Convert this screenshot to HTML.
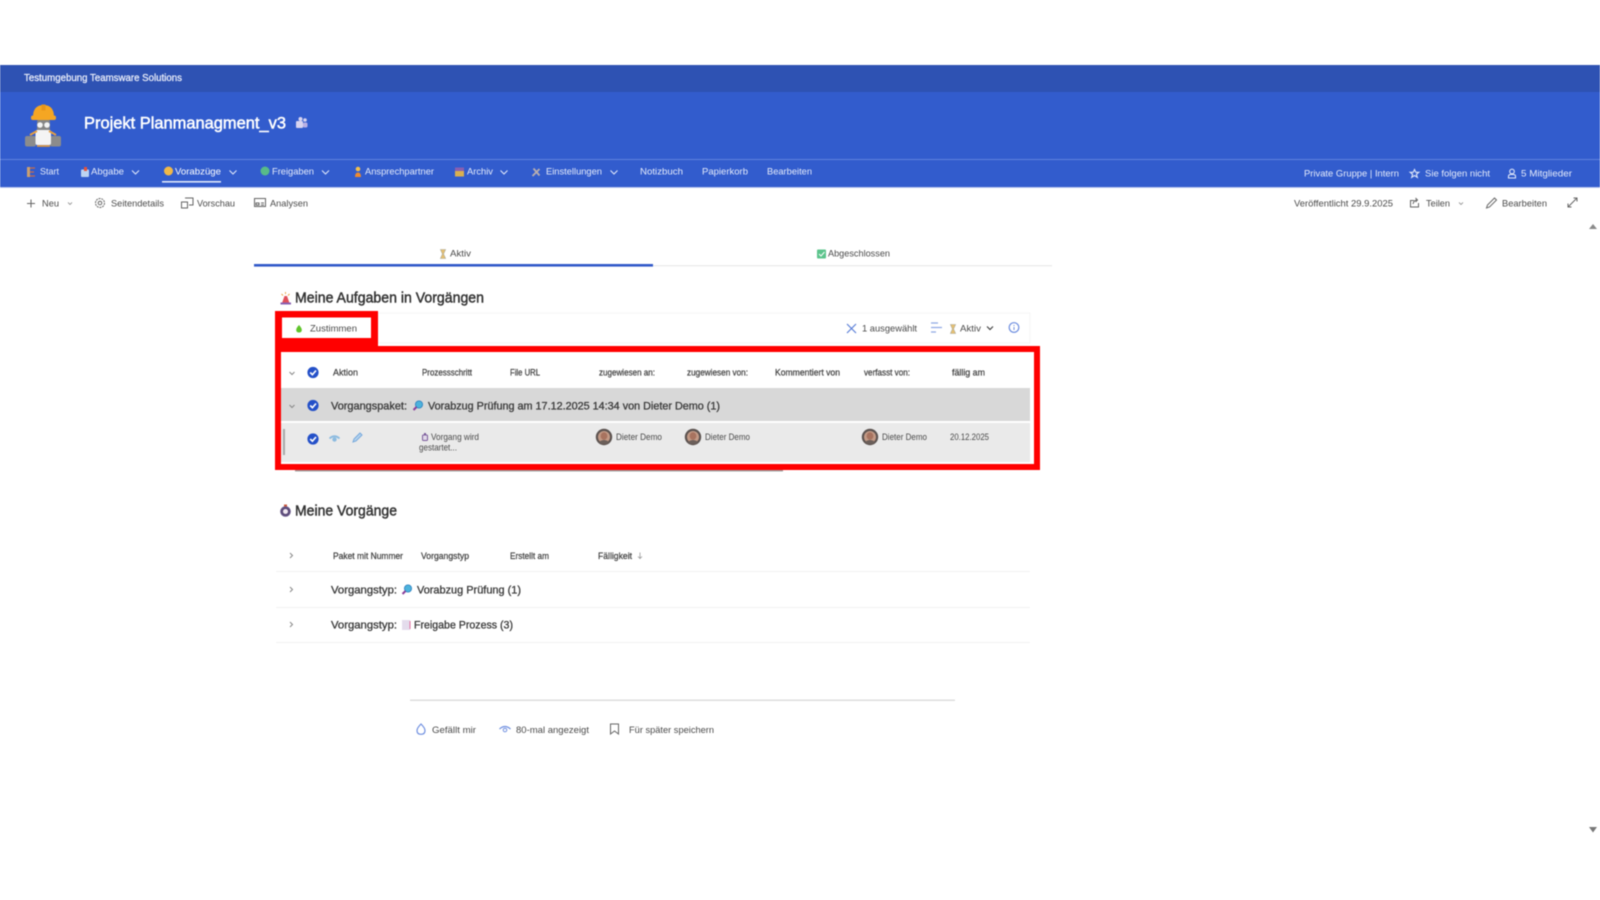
<!DOCTYPE html>
<html lang="de"><head><meta charset="utf-8"><title>Projekt Planmanagment_v3</title>
<style>
html,body{margin:0;padding:0;background:#fff;width:1600px;height:900px;overflow:hidden}
svg{display:block;filter:blur(.5px)}
text{font-family:"Liberation Sans",sans-serif;font-size:9.5px;fill:#4a4a4a;dominant-baseline:central}
.w{fill:#e6ecfb}
.h{font-size:9px;fill:#444;stroke:#444;stroke-width:.25px}
.t{font-size:14.5px;fill:#333;stroke:#333;stroke-width:.45px}
.g{font-size:11px;fill:#3c3c3c;stroke:#3c3c3c;stroke-width:.32px}
.i{fill:none;stroke:#666;stroke-width:1}
.b{fill:none;stroke:#6f8fe0;stroke-width:1.2}
.c{fill:none;stroke:#dfe7fa;stroke-width:1.1}
</style></head><body>
<svg width="1600" height="900" viewBox="0 0 1600 900" xmlns="http://www.w3.org/2000/svg">
<defs>
<g id="chk"><circle r="5.6" fill="#2450c8"/><path d="M-2.8 0 L-.6 2.2 L3 -2" fill="none" stroke="#fff" stroke-width="1.6"/></g>
<g id="av"><circle r="8.2" fill="#5c5350"/><circle r="6" fill="#c39a86"/><ellipse cy="-1" rx="3.4" ry="3.8" fill="#a8735f"/><path d="M-5 5 Q0 1 5 5 L3 7 L-3 7Z" fill="#6b5f5a"/></g>
<g id="mag"><circle cx="1" cy="-1.5" r="3.6" fill="#4db3dc" stroke="#2a7fc0" stroke-width=".8"/><path d="M-1.5 1 L-4.5 4" stroke="#8a3f9a" stroke-width="2"/></g>
<g id="hg"><path d="M-2.6 -4.5H2.6L.5 0L2.6 4.5H-2.6L-.5 0Z" fill="#e8c070" stroke="#a8a898" stroke-width=".6"/></g>
</defs>

<!-- top bars -->
<rect y="65" width="1600" height="27" fill="#2e52b3"/>
<rect y="92" width="1600" height="95" fill="#325ccd"/>
<rect y="159" width="1600" height="1" fill="#5f82de"/>
<rect y="187" width="1600" height="1" fill="#b9c8ef"/>
<text x="24" y="78.500" textLength="158" lengthAdjust="spacingAndGlyphs" style="font-size:10px;fill:#eef1fb;stroke:#eef1fb;stroke-width:.25px">Testumgebung Teamsware Solutions</text>

<!-- logo -->
<g>
<rect x="25" y="136" width="11" height="10.500" rx="2" fill="#8c8c8c"/><rect x="50" y="136" width="11" height="10.500" rx="2" fill="#8c8c8c"/>
<rect x="37" y="119" width="13" height="13" rx="3" fill="#858585"/>
<rect x="35.500" y="130" width="15.500" height="15" rx="2" fill="#f4f4f4"/>
<path d="M37 146h13" stroke="#f0a030" stroke-width="1.500"/>
<path d="M30 135 L37 131 M56 135 L49 131" stroke="#e8a040" stroke-width="2"/>
<circle cx="40" cy="125" r="2.800" fill="#f4f4f4"/><circle cx="47" cy="125" r="2.800" fill="#f4f4f4"/>
<path d="M33 117 Q33 105 43.500 105 Q54 105 54 117 Z" fill="#f5a623"/>
<rect x="31" y="115.500" width="25" height="4.500" rx="2" fill="#f5a623"/>
<rect x="41.500" y="104.500" width="4" height="6" fill="#e8951a"/>
</g>
<text x="84" y="123.500" textLength="202" lengthAdjust="spacingAndGlyphs" style="font-size:16.5px;fill:#fff;stroke:#fff;stroke-width:.5px">Projekt Planmanagment_v3</text>
<g fill="#d8d4f0"><rect x="296" y="121" width="7" height="7" rx="1"/><circle cx="305" cy="120" r="1.800"/><circle cx="300.500" cy="119" r="2"/><rect x="303" y="122.500" width="4.500" height="5" rx="1.500" fill="#b8b0e4"/></g>

<!-- nav -->
<g>
<rect x="27" y="167" width="3" height="10" fill="#c9a070"/><path d="M30 168h5M30 172h4M30 176h5" stroke="#c86a4a" stroke-width="1.200"/>
<text class="w" x="40" y="172" textLength="19" lengthAdjust="spacingAndGlyphs">Start</text>
<rect x="81" y="169.500" width="8" height="7.500" rx="1" fill="#bcd4f2"/><rect x="84" y="167" width="3" height="4" fill="#e5533d"/>
<text class="w" x="91" y="172" textLength="33" lengthAdjust="spacingAndGlyphs">Abgabe</text>
<path class="c" d="M132 170.500l3.500 3.500l3.500-3.500"/>
<circle cx="168.500" cy="171" r="4.500" fill="#f0b848"/>
<text class="w" x="175" y="172" textLength="46" lengthAdjust="spacingAndGlyphs" style="fill:#fff">Vorabzüge</text>
<rect x="162" y="181" width="59" height="1.600" fill="#dfe7fa"/>
<path class="c" d="M229.500 170.500l3.500 3.500l3.500-3.500"/>
<circle cx="265" cy="171" r="4.500" fill="#58bb88"/>
<text class="w" x="272" y="172" textLength="42" lengthAdjust="spacingAndGlyphs">Freigaben</text>
<path class="c" d="M322 170.500l3.500 3.500l3.500-3.500"/>
<circle cx="358" cy="169" r="2.300" fill="#f3c04d"/><path d="M355 177q0-4.500 3-4.500t3 4.500z" fill="#ee8a2e"/>
<text class="w" x="365" y="172" textLength="69" lengthAdjust="spacingAndGlyphs">Ansprechpartner</text>
<rect x="455" y="167.500" width="9" height="3.500" fill="#8a5fb0"/><rect x="455" y="171" width="9" height="5.500" fill="#d9b050"/>
<text class="w" x="467" y="172" textLength="26" lengthAdjust="spacingAndGlyphs">Archiv</text>
<path class="c" d="M500.500 170.500l3.500 3.500l3.500-3.500"/>
<path d="M532.500 176l7-7M533.500 168.500l6 7" stroke="#b8aeb0" stroke-width="1.800"/>
<text class="w" x="546" y="172" textLength="56" lengthAdjust="spacingAndGlyphs">Einstellungen</text>
<path class="c" d="M610.500 170.500l3.500 3.500l3.500-3.500"/>
<text class="w" x="640" y="172" textLength="43" lengthAdjust="spacingAndGlyphs">Notizbuch</text>
<text class="w" x="702" y="172" textLength="46" lengthAdjust="spacingAndGlyphs">Papierkorb</text>
<text class="w" x="767" y="172" textLength="45" lengthAdjust="spacingAndGlyphs">Bearbeiten</text>
<text class="w" x="1304" y="174" textLength="95" lengthAdjust="spacingAndGlyphs">Private Gruppe | Intern</text>
<path class="c" d="M1414.500 169.500l1.300 2.800h3l-2.400 2l.9 3l-2.800-1.800l-2.800 1.800l.9-3l-2.400-2h3z"/>
<text class="w" x="1425" y="174" textLength="65" lengthAdjust="spacingAndGlyphs">Sie folgen nicht</text>
<circle class="c" cx="1512" cy="171.500" r="2.300"/><path class="c" d="M1508.500 178v-1.500q0-2 2-2h3q2 0 2 2v1.500z"/>
<text class="w" x="1521" y="174" textLength="51" lengthAdjust="spacingAndGlyphs">5 Mitglieder</text>
</g>

<!-- command bar -->
<path d="M31 199.500v8M27 203.500h8" stroke="#666" stroke-width="1"/>
<text x="42" y="204" textLength="17" lengthAdjust="spacingAndGlyphs">Neu</text>
<path d="M68 202.500l2 2l2-2" fill="none" stroke="#999" stroke-width=".9"/>
<circle class="i" cx="100" cy="203" r="4.500" stroke-dasharray="2 .8"/><circle class="i" cx="100" cy="203" r="1.800"/>
<text x="111" y="204" textLength="53" lengthAdjust="spacingAndGlyphs">Seitendetails</text>
<path class="i" d="M185 198h8v7h-4M181.500 202h6v6h-6z"/>
<text x="197" y="204" textLength="38" lengthAdjust="spacingAndGlyphs">Vorschau</text>
<rect class="i" x="254.500" y="198.500" width="11" height="8"/><path class="i" d="M256 203h3v2h-3zM261 203h3M261 205h3"/>
<text x="270" y="204" textLength="38" lengthAdjust="spacingAndGlyphs">Analysen</text>
<text x="1294" y="204" textLength="99" lengthAdjust="spacingAndGlyphs">Veröffentlicht 29.9.2025</text>
<path class="i" d="M1411 200.500h3M1418.500 203v4h-8v-7M1413 204q1-4 4-4M1415.500 198l2 2l-2 2"/>
<text x="1426" y="204" textLength="24" lengthAdjust="spacingAndGlyphs">Teilen</text>
<path d="M1459 202.500l2 2l2-2" fill="none" stroke="#999" stroke-width=".9"/>
<path class="i" d="M1486.500 208l1-3l7-7l2 2l-7 7z"/>
<text x="1502" y="204" textLength="45" lengthAdjust="spacingAndGlyphs">Bearbeiten</text>
<path class="i" d="M1568 207l9-9M1573.500 198h3.500v3.500M1568 203.500v3.500h3.500"/>
<path d="M1593 224l4 5h-8z" fill="#8a8a8a"/>
<path d="M1589 827h8l-4 5.500z" fill="#777"/>

<!-- tabs -->
<use href="#hg" x="443" y="254"/>
<text x="450" y="254" textLength="21" lengthAdjust="spacingAndGlyphs">Aktiv</text>
<rect x="817" y="249.500" width="9" height="9" rx="1" fill="#5cc48c"/><path d="M819 254l2 2l3.500-4" fill="none" stroke="#fff" stroke-width="1"/>
<text x="828" y="254" textLength="62" lengthAdjust="spacingAndGlyphs">Abgeschlossen</text>
<rect x="254" y="264" width="399" height="2.600" fill="#3159c9"/>
<rect x="653" y="265" width="399" height="1.400" fill="#ececec"/>

<!-- heading 1 -->
<path d="M282 303l2.500-7h2.500l2.500 7z" fill="#e0505a"/><rect x="280.500" y="302.500" width="10.500" height="2" fill="#8a60b0"/><path d="M285.500 292v2M281.500 294l1.500 1.500M289.500 294l-1.500 1.500" stroke="#e9a13a" stroke-width=".9"/>
<text class="t" x="295" y="298.500" textLength="189" lengthAdjust="spacingAndGlyphs">Meine Aufgaben in Vorgängen</text>

<!-- toolbar box -->
<rect x="378" y="313" width="652" height="30" fill="#fff" stroke="#f6f6f6"/>
<path d="M299 325q-2.800 3-2.800 5q0 2.500 2.800 2.500t2.800-2.500q0-2-2.800-5z" fill="#5fc42a"/>
<text x="310" y="329" textLength="47" lengthAdjust="spacingAndGlyphs">Zustimmen</text>
<path d="M847 324l9 9M856 324l-9 9" stroke="#5b7fd8" stroke-width="1.200"/>
<text x="862" y="329" textLength="55" lengthAdjust="spacingAndGlyphs">1 ausgewählt</text>
<path d="M931 323h7M931 327.500h11M931 332h5" stroke="#8ea8e4" stroke-width="1.200"/>
<use href="#hg" x="953" y="329"/>
<text x="960" y="329" textLength="21" lengthAdjust="spacingAndGlyphs">Aktiv</text>
<path d="M987 326.500l3 3l3-3" fill="none" stroke="#444" stroke-width="1.200"/>
<circle class="b" cx="1014" cy="327.500" r="4.800"/><path d="M1014 327v3M1014 325v1" stroke="#6f8fe0"/>

<!-- red frame -->
<g fill="#f00">
<path fill-rule="evenodd" d="M275 311H378V346H1040V470H275Z M282 317.500V338H371V317.500Z M281 352V464H1034V352Z"/>
</g>
<rect x="282" y="338" width="89" height="14" fill="#f00"/>
<rect x="295" y="470" width="488" height="1.500" fill="#a0a0a0"/>

<!-- table -->
<path d="M289.500 372l2.500 2.500l2.500-2.500" fill="none" stroke="#888"/>
<use href="#chk" x="313" y="372.500"/>
<g>
<text class="h" x="333" y="372.500" textLength="25" lengthAdjust="spacingAndGlyphs">Aktion</text>
<text class="h" x="422" y="372.500" textLength="50" lengthAdjust="spacingAndGlyphs">Prozessschritt</text>
<text class="h" x="510" y="372.500" textLength="30" lengthAdjust="spacingAndGlyphs">File URL</text>
<text class="h" x="599" y="372.500" textLength="56" lengthAdjust="spacingAndGlyphs">zugewiesen an:</text>
<text class="h" x="687" y="372.500" textLength="61" lengthAdjust="spacingAndGlyphs">zugewiesen von:</text>
<text class="h" x="775" y="372.500" textLength="65" lengthAdjust="spacingAndGlyphs">Kommentiert von</text>
<text class="h" x="864" y="372.500" textLength="46" lengthAdjust="spacingAndGlyphs">verfasst von:</text>
<text class="h" x="952" y="372.500" textLength="33" lengthAdjust="spacingAndGlyphs">fällig am</text>
</g>
<rect x="281" y="388" width="749" height="33" fill="#d8d8d8"/>
<path d="M289.500 405l2.500 2.500l2.500-2.500" fill="none" stroke="#888"/>
<use href="#chk" x="313" y="405.500"/>
<text class="g" x="331" y="406.500" textLength="76" lengthAdjust="spacingAndGlyphs">Vorgangspaket:</text>
<use href="#mag" x="418" y="406"/>
<text class="g" x="428" y="406.500" textLength="292" lengthAdjust="spacingAndGlyphs">Vorabzug Prüfung am 17.12.2025 14:34 von Dieter Demo (1)</text>
<rect x="281" y="423" width="749" height="39" fill="#eaeaea"/>
<rect x="283" y="429" width="2" height="26" fill="#a8a8a8"/>
<use href="#chk" x="313" y="439"/>
<path d="M329.500 438.500q5-4.500 10 0" fill="none" stroke="#8cbbe0" stroke-width="1.800"/><circle cx="334.500" cy="439.500" r="2.200" fill="#8cbbe0"/>
<path d="M353 442l1-3l6-6l2 2l-6 6z" fill="#b6d4ee" stroke="#75a8dc" stroke-width="1"/>
<rect x="422.500" y="435" width="5" height="5.500" rx="1" fill="#e0d8e8" stroke="#7a5a9a" stroke-width="1"/><rect x="424" y="433" width="2" height="2" fill="#7a5a9a"/>
<text x="431" y="437.500" textLength="48" lengthAdjust="spacingAndGlyphs">Vorgang wird</text>
<text x="419" y="448" textLength="38" lengthAdjust="spacingAndGlyphs">gestartet...</text>
<use href="#av" x="604" y="437"/>
<text x="616" y="437.500" textLength="46" lengthAdjust="spacingAndGlyphs">Dieter Demo</text>
<use href="#av" x="693" y="437"/>
<text x="705" y="437.500" textLength="45" lengthAdjust="spacingAndGlyphs">Dieter Demo</text>
<use href="#av" x="870" y="437"/>
<text x="882" y="437.500" textLength="45" lengthAdjust="spacingAndGlyphs">Dieter Demo</text>
<text x="950" y="437.500" textLength="39" lengthAdjust="spacingAndGlyphs">20.12.2025</text>

<!-- heading 2 -->
<circle cx="285.500" cy="511.500" r="4.800" fill="#5a4a78" stroke="#6a5a8a"/><circle cx="285.500" cy="511.500" r="2.500" fill="#f0e8f0"/><rect x="284" y="504.500" width="3" height="2" fill="#c8563a"/>
<text class="t" x="295" y="511.500" textLength="102" lengthAdjust="spacingAndGlyphs">Meine Vorgänge</text>

<!-- table 2 -->
<path d="M290 553l2.500 2.500l-2.500 2.500" fill="none" stroke="#888"/>
<text class="h" x="333" y="556" textLength="70" lengthAdjust="spacingAndGlyphs">Paket mit Nummer</text>
<text class="h" x="421" y="556" textLength="48" lengthAdjust="spacingAndGlyphs">Vorgangstyp</text>
<text class="h" x="510" y="556" textLength="39" lengthAdjust="spacingAndGlyphs">Erstellt am</text>
<text class="h" x="598" y="556" textLength="34" lengthAdjust="spacingAndGlyphs">Fälligkeit</text>
<path d="M640 552.500v6M638 556.500l2 2l2-2" fill="none" stroke="#999" stroke-width=".8"/>
<rect x="276" y="571" width="754" height="1" fill="#f1f1f1"/>
<path d="M290 587l2.500 2.500l-2.500 2.500" fill="none" stroke="#888"/>
<text class="g" x="331" y="590.500" textLength="66" lengthAdjust="spacingAndGlyphs">Vorgangstyp:</text>
<use href="#mag" x="407" y="590"/>
<text class="g" x="417" y="590.500" textLength="104" lengthAdjust="spacingAndGlyphs">Vorabzug Prüfung (1)</text>
<rect x="276" y="607" width="754" height="1" fill="#f1f1f1"/>
<path d="M290 622l2.500 2.500l-2.500 2.500" fill="none" stroke="#888"/>
<text class="g" x="331" y="625.500" textLength="66" lengthAdjust="spacingAndGlyphs">Vorgangstyp:</text>
<rect x="402" y="620" width="8" height="10" fill="#e4dcec"/><path d="M410 621v8" stroke="#e070a0"/>
<text class="g" x="414" y="625.500" textLength="99" lengthAdjust="spacingAndGlyphs">Freigabe Prozess (3)</text>
<rect x="276" y="642" width="754" height="1" fill="#f1f1f1"/>

<!-- footer -->
<rect x="410" y="699.500" width="545" height="1.500" fill="#dedede"/>
<path class="b" d="M421 724q-4 4-4 6.500q0 3.800 4 3.800t4-3.800q0-2.500-4-6.500z"/>
<text x="432" y="730.500" textLength="44" lengthAdjust="spacingAndGlyphs">Gefällt mir</text>
<path class="b" d="M499.500 729q5.500-5 11 0"/><circle cx="505" cy="730" r="1.800" fill="none" stroke="#6f8fe0"/>
<text x="516" y="730.500" textLength="73" lengthAdjust="spacingAndGlyphs">80-mal angezeigt</text>
<path class="i" d="M610.500 724h8v10l-4-3l-4 3z"/>
<text x="629" y="730.500" textLength="85" lengthAdjust="spacingAndGlyphs">Für später speichern</text>
</svg>
</body></html>
